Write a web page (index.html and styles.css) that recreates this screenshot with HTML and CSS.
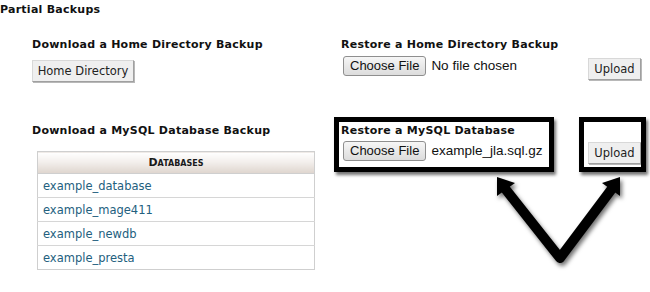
FILE: index.html
```html
<!DOCTYPE html>
<html>
<head>
<meta charset="utf-8">
<link rel="stylesheet" href="styles.css">
</head>
<body>
<h1 class="title">Partial Backups</h1>
<div class="grid">
  <section class="cell">
    <h2 class="heading">Download a Home Directory Backup</h2>
    <button class="btn home-btn">Home Directory</button>
  </section>
  <section class="cell">
    <h2 class="heading">Restore a Home Directory Backup</h2>
    <div class="file-row first">
      <span class="choose">Choose File</span>
      <span class="fname">No file chosen</span>
      <button class="btn upload">Upload</button>
    </div>
  </section>
  <section class="cell">
    <h2 class="heading">Download a MySQL Database Backup</h2>
    <table class="db-table">
      <thead><tr><th>Databases</th></tr></thead>
      <tbody>
        <tr><td><a href="#">example_database</a></td></tr>
        <tr><td><a href="#">example_mage411</a></td></tr>
        <tr><td><a href="#">example_newdb</a></td></tr>
        <tr><td><a href="#">example_presta</a></td></tr>
      </tbody>
    </table>
  </section>
  <section class="cell">
    <h2 class="heading">Restore a MySQL Database</h2>
    <div class="file-row second">
      <span class="choose">Choose File</span>
      <span class="fname">example_jla.sql.gz</span>
      <button class="btn upload">Upload</button>
    </div>
  </section>
</div>
<div class="callout callout-file"></div>
<div class="callout callout-upload"></div>
<svg class="arrows" width="650" height="292" viewBox="0 0 650 292">
  <polyline points="503,186 560,258 614,186" fill="none" stroke="#000" stroke-width="10" stroke-linejoin="round"/>
  <polygon points="497,177 515,183 497,196" fill="#000"/>
  <polygon points="620,177 620,196 602,183" fill="#000"/>
</svg>
</body>
</html>
```
FILE: styles.css
```css
body {
  margin: 0;
  background: #fff;
  font-family: "DejaVu Sans", Verdana, sans-serif;
  color: #111;
  width: 650px;
  height: 292px;
  overflow: hidden;
  position: relative;
}
.title {
  margin: 3px 0 0 0;
  font-size: 11px;
  line-height: 14px;
  font-weight: bold;
  letter-spacing: 0.25px;
  color: #111;
}
.grid {
  display: grid;
  grid-template-columns: 309px 303px;
  grid-template-rows: 44px auto;
  row-gap: 42px;
  padding-left: 32px;
  margin-top: 21px;
}
.heading {
  margin: 0;
  font-size: 11px;
  line-height: 14px;
  font-weight: bold;
  letter-spacing: 0.25px;
  color: #111;
  white-space: nowrap;
}
.btn {
  font-family: "DejaVu Sans", Verdana, sans-serif;
  font-size: 11.5px;
  color: #222;
  background: #efefef;
  border: 1px solid #d8d8d8;
  border-right-color: #a0a0a0;
  border-bottom-color: #a0a0a0;
  box-shadow: 1px 1px 0 #b8b8b8;
  padding: 0 4px;
  margin: 0;
  white-space: nowrap;
}
.home-btn {
  display: block;
  margin-top: 8px;
  height: 22px;
  width: 102px;
}
.file-row {
  display: flex;
  align-items: flex-start;
  white-space: nowrap;
}
.file-row.first { margin-top: 4px; }
.file-row.second { margin-top: 3px; }
.choose {
  font-family: "Liberation Sans", Arial, sans-serif;
  font-size: 13px;
  line-height: 18px;
  color: #111;
  background: linear-gradient(#f6f6f6, #dcdcdc);
  border: 1px solid #8f8f8f;
  border-radius: 3px;
  padding: 0 6px;
  margin-left: 2px;
  white-space: nowrap;
}
.fname {
  font-family: "Liberation Sans", Arial, sans-serif;
  font-size: 13.5px;
  line-height: 19px;
  color: #111;
  margin-left: 5px;
  white-space: nowrap;
}
.upload {
  margin-left: auto;
  height: 22px;
  width: 53px;
  font-size: 11.5px;
  margin-right: 3px;
}
.file-row.first .upload { margin-top: 2px; }
.file-row.second .upload { margin-top: 1px; }
.db-table {
  margin: 13px 0 0 5px;
  width: 278px;
  border-collapse: collapse;
  border: 1px solid #cfcfcf;
}
.db-table th {
  height: 21px;
  padding: 0;
  font-size: 11px;
  font-weight: bold;
  font-variant: small-caps;
  color: #1a1a1a;
  background: linear-gradient(#ffffff 0%, #f3efec 45%, #ded5ce 100%);
  border-bottom: 1px solid #cfcfcf;
  text-align: center;
}
.db-table td {
  height: 23px;
  padding: 0 0 0 5px;
  border-top: 1px solid #d6d6d6;
  font-size: 11.5px;
}
.db-table a {
  color: #23607e;
  text-decoration: none;
}
.callout {
  position: absolute;
  top: 117px;
  height: 55px;
  box-sizing: border-box;
  border: 5px solid #000;
  box-shadow: 2px 3px 3px rgba(0, 0, 0, 0.55);
}
.callout-file {
  left: 334px;
  width: 220px;
}
.callout-upload {
  left: 579px;
  width: 67px;
}
.arrows {
  position: absolute;
  left: 0;
  top: 0;
  filter: drop-shadow(2px 3px 2px rgba(0, 0, 0, 0.55));
  pointer-events: none;
}
```
